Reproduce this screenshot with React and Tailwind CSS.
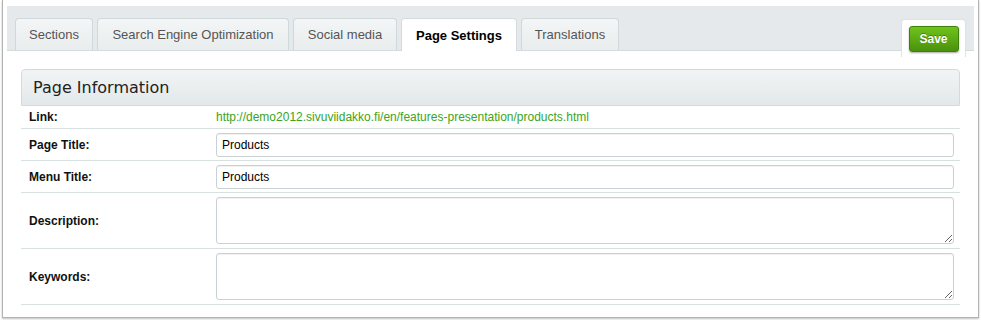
import { useState } from 'react';

const tabs = [
  { name: 'Sections', w: 'w-[78px]' },
  { name: 'Search Engine Optimization', w: 'w-[192px]' },
  { name: 'Social media', w: 'w-[104px]' },
  { name: 'Page Settings', w: 'w-[116px]' },
  { name: 'Translations', w: 'w-[98px]' },
];

function Row({ label, children }) {
  return (
    <div className="flex items-center border-b border-[#d9e0e2] pr-[6px]">
      <div className="w-[195px] shrink-0 pl-[8px] text-[12px] font-bold text-[#111]">{label}</div>
      <div className="flex-1">{children}</div>
    </div>
  );
}

export default function App() {
  const [active] = useState('Page Settings');
  const font = { fontFamily: '"Liberation Sans", Arial, sans-serif' };
  const field =
    'block w-full rounded-[3px] border border-[#c8d2d4] shadow-[inset_0_1px_1px_rgba(0,0,0,0.06)] px-[5px] text-[12px] text-black outline-none';

  return (
    <div className="w-[981px] h-[320px] bg-white" style={font}>
      <div className="ml-[2px] w-[977px] h-[318px] border-x border-b border-[#b3b3b3] shadow-[0_1px_2px_rgba(0,0,0,0.25)] px-[4px] pt-[6px] bg-white">
        {/* tab bar */}
        <div className="h-[45px] bg-[#e5e9eb] border-b border-[#d3dbdd] flex items-end justify-between pl-[8px] pr-[8px]">
          <div className="flex gap-[4px] items-end">
            {tabs.map((t) => (
              <div
                key={t.name}
                className={
                  t.name === active
                    ? `${t.w} h-[33px] -mb-[1px] pt-[1px] flex items-center justify-center rounded-t-[4px] border border-b-0 border-[#d3dbdd] bg-white text-[13px] font-bold text-black`
                    : `${t.w} h-[32px] pt-[1px] flex items-center justify-center rounded-t-[4px] border border-b-0 border-[#cfd8da] bg-gradient-to-b from-[#f3f5f6] to-[#e9edee] text-[13px] text-[#555]`
                }
              >
                {t.name}
              </div>
            ))}
          </div>
          <div className="h-[38px] -mb-[7px] w-[65px] rounded-t-[4px] border border-b-0 border-[#dde3e5] bg-white flex justify-center pt-[6px]">
            <button className="h-[26px] w-[50px] rounded-[3px] border border-[#3f7f0b] bg-gradient-to-b from-[#6fc41c] to-[#4b910c] text-white text-[12px] font-bold shadow-[0_1px_2px_rgba(0,0,0,0.35)] [text-shadow:0_-1px_0_rgba(0,0,0,0.3)]">
              Save
            </button>
          </div>
        </div>

        {/* content */}
        <div className="px-[14px] pt-[18px]">
          <div className="h-[37px] rounded-t-[4px] border border-[#d3dadc] bg-gradient-to-b from-[#f1f4f5] to-[#e3e8ea] flex items-center pl-[11px]">
            <span className="text-[16px] text-[#222]" style={{ fontFamily: '"DejaVu Sans", Verdana, sans-serif' }}>
              Page Information
            </span>
          </div>

          <Row label="Link:">
            <div className="h-[22px] flex items-center text-[12px] text-[#3ba51b]">
              http://demo2012.sivuviidakko.fi/en/features-presentation/products.html
            </div>
          </Row>
          <Row label="Page Title:">
            <div className="pt-[4px] pb-[3px]">
              <input defaultValue="Products" className={`${field} h-[24px]`} style={font} />
            </div>
          </Row>
          <Row label="Menu Title:">
            <div className="pt-[4px] pb-[3px]">
              <input defaultValue="Products" className={`${field} h-[24px]`} style={font} />
            </div>
          </Row>
          <Row label="Description:">
            <div className="pt-[4px] pb-[4px]">
              <textarea className={`${field} h-[47px]`} />
            </div>
          </Row>
          <Row label="Keywords:">
            <div className="pt-[4px] pb-[4px]">
              <textarea className={`${field} h-[47px]`} />
            </div>
          </Row>
        </div>
      </div>
    </div>
  );
}
